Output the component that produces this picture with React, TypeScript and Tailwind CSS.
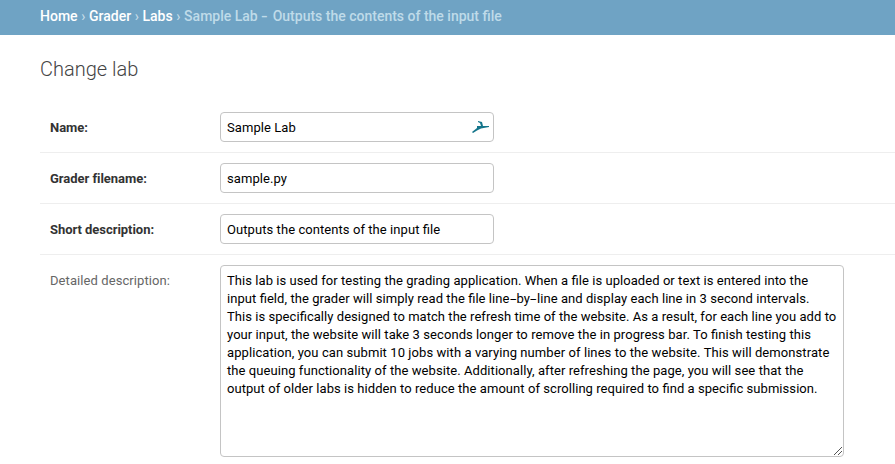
import type { ReactNode } from 'react';

function Row({ label, strong = true, children }: { label: string; strong?: boolean; children: ReactNode }) {
  return (
    <div className="flex items-start border-b border-[#eeeeee] p-[10px]">
      <label className={`w-[170px] shrink-0 pt-[7px] leading-[18px] ${strong ? 'font-bold tracking-[-0.04px] text-[#333333]' : 'tracking-[0.08px] text-[#666666]'}`}>{label}</label>
      {children}
    </div>
  );
}

function Field({ value, children }: { value: string; children?: ReactNode }) {
  return (
    <div className="flex h-[30px] w-[274px] items-center justify-between rounded-[4px] border border-[#c4c4c4] bg-white px-[6px] text-black">
      <span className="pt-[2px] tracking-[0.07px] [font-feature-settings:'liga'_1]">{value}</span>
      {children}
    </div>
  );
}

const lines = [
  { text: 'This lab is used for testing the grading application. When a file is uploaded or text is entered into the', tracking: 'tracking-[0.06px]' },
  { text: 'input field, the grader will simply read the file line-by-line and display each line in 3 second intervals.', tracking: 'tracking-[0.06px]' },
  { text: 'This is specifically designed to match the refresh time of the website. As a result, for each line you add to', tracking: 'tracking-[0.05px]' },
  { text: 'your input, the website will take 3 seconds longer to remove the in progress bar. To finish testing this', tracking: 'tracking-[0.07px]' },
  { text: 'application, you can submit 10 jobs with a varying number of lines to the website. This will demonstrate', tracking: 'tracking-[0.08px]' },
  { text: 'the queuing functionality of the website. Additionally, after refreshing the page, you will see that the', tracking: 'tracking-[0.07px]' },
  { text: 'output of older labs is hidden to reduce the amount of scrolling required to find a specific submission.', tracking: 'tracking-[0.06px]' },
];

function Line({ text, tracking }: { text: string; tracking: string }) {
  return (
    <p className={tracking}>
      {text.split(/(-)/).map((part, i) => (
        <span key={i} className={part === '-' ? 'inline-block w-[7px] origin-left scale-x-[1.8]' : ''}>{part}</span>
      ))}
    </p>
  );
}

export default function App() {
  return (
    <div className="h-[464px] w-[895px] overflow-hidden bg-white font-[Roboto,sans-serif] text-[13px]">
      <nav className="flex h-[35px] items-center gap-[3.6px] whitespace-pre bg-[#6fa3c4] pb-[3px] pl-10 text-[14px] font-medium text-[#c4dce8]">
        <span className="text-white">Home</span>
        <span>›</span>
        <span className="text-white">Grader</span>
        <span>›</span>
        <span className="text-white">Labs</span>
        <span>›</span>
        <span className="text-[#bfdbe9] [font-feature-settings:'liga'_1]">
          Sample Lab <span className="inline-block w-[8px] origin-left scale-x-[1.4]">-</span> Outputs the contents of the input file
        </span>
      </nav>
      <main className="pl-10">
        <h1 className="h-[67px] pt-[22px] text-[20px] leading-6 font-light text-[#444444]">Change lab</h1>
        <Row label="Name:">
          <Field value="Sample Lab">
            <svg width="18" height="14" viewBox="0 0 18 14" className="-mr-[2px]" fill="#14758b">
              <path d="M7 1 L11 2 L12 6 L18 6 L18 7 L10 8.5 L6 10.5 L2 13 L1 12 L6 8 L6 6 L10 6 L9 3 L7 2 Z" />
            </svg>
          </Field>
        </Row>
        <Row label="Grader filename:"><Field value="sample.py" /></Row>
        <Row label="Short description:"><Field value="Outputs the contents of the input file" /></Row>
        <Row label="Detailed description:" strong={false}>
          <div className="flex h-[192px] w-[624px] shrink-0 justify-between rounded-[4px] border border-[#c4c4c4] px-[6px] pt-[6px] text-black">
            <div className="w-0 leading-[18px] whitespace-nowrap [font-feature-settings:'liga'_1]">
              {lines.map((line) => <Line key={line.text} {...line} />)}
            </div>
            <svg width="8" height="8" viewBox="0 0 8 8" className="-mr-[5px] mb-px shrink-0 self-end" stroke="#555555" fill="none">
              <path d="M0 8 L8 0 M4 8 L8 4" />
            </svg>
          </div>
        </Row>
      </main>
    </div>
  );
}
